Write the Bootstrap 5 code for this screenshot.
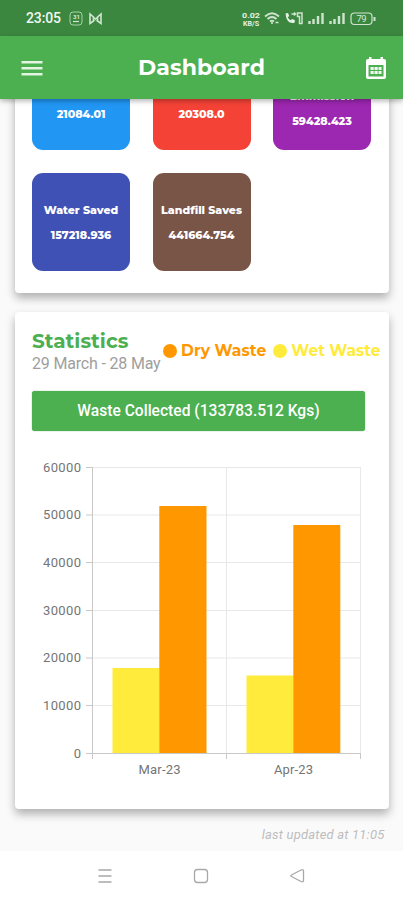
<!DOCTYPE html>
<html lang="en">
<head>
<meta charset="utf-8">
<meta name="viewport" content="width=device-width, initial-scale=1">
<title>Dashboard</title>
<link href="https://cdn.jsdelivr.net/npm/bootstrap@5.3.0/dist/css/bootstrap.min.css" rel="stylesheet">
<style>
body{font-family:Roboto,"Liberation Sans",sans-serif;background:#fafafa;height:900px;overflow:hidden}
.geo{font-family:Montserrat,Inter,"Open Sans",sans-serif;font-weight:700;white-space:nowrap}
.status-strip{height:36px;background:#3c873f}
.app-bar{height:63px;background:#4caf50;padding:0 16px 0 20px;box-shadow:0 2px 5px rgba(0,0,0,.3);z-index:2}
.app-title{font-size:22px;line-height:28px;letter-spacing:.1px;margin-right:6px}
.view{height:752px;padding:0 14.5px}
.panel{border:0;border-radius:4px;box-shadow:0 5px 10px rgba(0,0,0,.3)}
.metrics{margin-top:-69px;height:263px;padding:22px 17.5px 22.5px;display:grid;grid-template-columns:repeat(3,98px);grid-auto-rows:98px;gap:22.5px}
.metric{border-radius:11px;color:#fff;font-size:11px;line-height:14px;gap:11px;padding-top:2px}
.metric .geo{font-weight:800}
.metric-short{padding-top:26px}
.metric-tall{padding-top:15px}
.blue{background:#2196f3}.red{background:#f44336}.purple{background:#9c27b0}.indigo{background:#3f51b5}.brown{background:#795548}
.stats{margin-top:18.5px;height:497.5px;padding:17px 0 0 17.5px}
.stats-head{height:62.5px}
.stats-title{color:#4caf50;font-size:20px;line-height:25px;letter-spacing:.05px}
.range{color:#9e9e9e;font-size:16px;letter-spacing:-.18px;width:129px;line-height:20px;white-space:nowrap}
.legend{font-size:15.5px;line-height:20px;padding-top:12.5px;margin-left:2px}
.dot{width:14px;height:14px;border-radius:50%;margin-right:4px}
.dry{color:#ff9800;letter-spacing:.1px}.dry .dot{background:#ff9800}
.wet{color:#ffeb3b;margin-left:7px}.wet .dot{background:#ffeb3b}
.total{width:333px;height:40px;background:#4caf50;border-radius:3px;color:#fff;font-weight:500;font-size:15.6px;padding-top:2px;box-shadow:0 0 1px #388e3c}
.chart{margin-top:24px;display:block}
.updated{font-size:13px;line-height:18px;color:#bdbdbd;margin:16.5px 4px 0 0;letter-spacing:.2px}
.system-nav{height:49px;background:#fff}
</style>
<script src="https://cdn.jsdelivr.net/npm/bootstrap@5.3.0/dist/js/bootstrap.bundle.min.js"></script>
</head>
<body class="d-flex flex-column">
<div class="status-strip flex-shrink-0">
<svg class="d-block" width="403" height="36" fill="none" stroke="#cfe4cf" font-family="Roboto,sans-serif">
<text x="26" y="23" fill="#f1f8f1" stroke="none" font-size="14" font-weight="500" textLength="35">23:05</text>
<rect x="70" y="12" width="12" height="13" rx="3" stroke-width="1" stroke="#a5cfa6"/>
<text x="73" y="19" fill="#d8ead8" stroke="none" font-size="6" font-weight="700">31</text><path d="M73 21.500h6" stroke-width="1.200"/>
<path d="M90 23.500v-9.500l3.500 3v4zM101 23.500v-9.500l-3.500 3v4zM92 16l7 6M99 16l-7 6" stroke-width="1.600"/>
<g fill="#e4f1e4" stroke="none" font-weight="700"><text x="242" y="18" font-size="8" textLength="18" lengthAdjust="spacingAndGlyphs">0.02</text><text x="243" y="26" font-size="6.500" textLength="16" lengthAdjust="spacingAndGlyphs">KB/S</text></g>
<path d="M265 16.500q7-6.500 14 0M267.500 19q4.500-4 9 0M270 21.500q2-1.700 4 0" stroke-width="1.800"/><path d="M272 24v-2.500M275.500 22.500h3" stroke-width="1.600"/>
<path d="M285.500 13.500l2.500-.5 1.200 3-1.500 1.300q1 2 3 3l1.500-1.400 2.800 1.300-.5 2.600q-8 1.500-9-9.300z" fill="#e4f1e4" stroke="none"/>
<path d="M291.500 14h4M294 12.500l1.500 1.500-1.500 1.500M297.500 13h4.500v10.500h-2.500v-7h-2z" stroke-width="1.500"/>
<path d="M309.500 24v-3M313.500 24v-5M318 24v-8M322.500 24v-11M330.500 24v-3M334.500 24v-5M339 24v-8M343.500 24v-11" stroke-width="2.400"/>
<rect x="351" y="13" width="21" height="11.500" rx="3.500" stroke-width="1.200"/><path d="M374.500 17v4" stroke-width="2"/>
<text x="356.500" y="22.300" fill="#d8ead8" stroke="none" font-size="9.500" textLength="10">79</text>
</svg>
</div>
<header class="app-bar d-flex align-items-center justify-content-between text-white flex-shrink-0 position-relative">
<svg width="24" height="24" viewBox="0 0 24 24" stroke="#e2f4e2" stroke-width="2.400"><path d="M1.500 6.200h21M1.500 12.200h21M1.500 18.200h21"/></svg>
<span class="geo app-title">Dashboard</span>
<svg width="22" height="24" viewBox="0 0 22 24"><path fill="#fff" fill-rule="evenodd" d="M4 1h2.500v2h9V1H18v2h1q2 0 2 2v16q0 2-2 2H3q-2 0-2-2V5q0-2 2-2h1zM3.500 9v11.500h15V9z"/><path stroke="#f0faf0" stroke-width="2.800" stroke-dasharray="3.200 .8" d="M5.500 12.500h11M5.500 16.500h11"/></svg>
</header>
<main class="view overflow-hidden flex-shrink-0">
<section class="card panel metrics">
<div class="metric metric-short blue d-flex flex-column align-items-center justify-content-center"><span class="geo">21084.01</span></div>
<div class="metric metric-short red d-flex flex-column align-items-center justify-content-center"><span class="geo">20308.0</span></div>
<div class="metric metric-tall purple d-flex flex-column align-items-center justify-content-center"><span class="geo">Emmission</span><span class="geo">59428.423</span></div>
<div class="metric indigo d-flex flex-column align-items-center justify-content-center"><span class="geo">Water Saved</span><span class="geo">157218.936</span></div>
<div class="metric brown d-flex flex-column align-items-center justify-content-center"><span class="geo">Landfill Saves</span><span class="geo">441664.754</span></div>
</section>
<section class="card panel stats">
<div class="stats-head d-flex">
<div><div class="geo stats-title">Statistics</div><div class="range">29 March - 28 May</div></div>
<div class="legend d-flex align-items-start geo">
<span class="dry d-flex align-items-center"><i class="dot"></i>Dry Waste</span><span class="wet d-flex align-items-center"><i class="dot"></i>Wet Waste</span>
</div>
</div>
<div class="total d-flex align-items-center justify-content-center">Waste Collected (133783.512 Kgs)</div>
<svg class="chart" width="350" height="330" viewBox="32 455 350 330" font-family="Roboto,sans-serif" font-size="13" fill="#757575">
<path d="M92 467.500H361M92 515H361M92 562.500H361M92 610.500H361M92 658H361M92 705.500H361M226.500 467V753M360.500 467V753" stroke="#e8e8e8" fill="none"/>
<path d="M86 467.500h6M86 515h6M86 562.500h6M86 610.500h6M86 658h6M86 705.500h6M86 753.500H361M92.500 467V759M226.500 753v6M360.500 753v6" stroke="#c8c8c8" fill="none"/>
<path fill="#ffeb3b" d="M112.500 668H159.500V753H112.500zM246.500 675.500H293.500V753H246.500z"/>
<path fill="#ff9800" d="M159.300 506H206.500V753H159.300zM293.300 525H340.300V753H293.300z"/>
<g text-anchor="end"><text x="81" y="471.500" textLength="38">60000</text><text x="81" y="519.200" textLength="38">50000</text><text x="81" y="567" textLength="38">40000</text><text x="81" y="614.700" textLength="38">30000</text><text x="81" y="662.300" textLength="38">20000</text><text x="81" y="710" textLength="38">10000</text><text x="81" y="757.700">0</text></g>
<g text-anchor="middle"><text x="159.500" y="774" textLength="42">Mar-23</text><text x="293.500" y="774" textLength="39">Apr-23</text></g>
</svg>
</section>
<div class="updated fst-italic text-end">last updated at 11:05</div>
</main>
<nav class="system-nav flex-shrink-0">
<svg class="d-block" width="403" height="49" fill="none" stroke="#a8a8a8" stroke-width="1.300"><path d="M98.500 19h13M98.500 25h13M98.500 31h13"/><rect x="194.500" y="18.500" width="13" height="13" rx="3"/><path d="M291.500 24l9.500-5q2.500-1 2.500 1v9.500q0 2-2.500 1l-9.500-5q-1.500-.7 0-1.500z"/></svg>
</nav>
</body>
</html>
